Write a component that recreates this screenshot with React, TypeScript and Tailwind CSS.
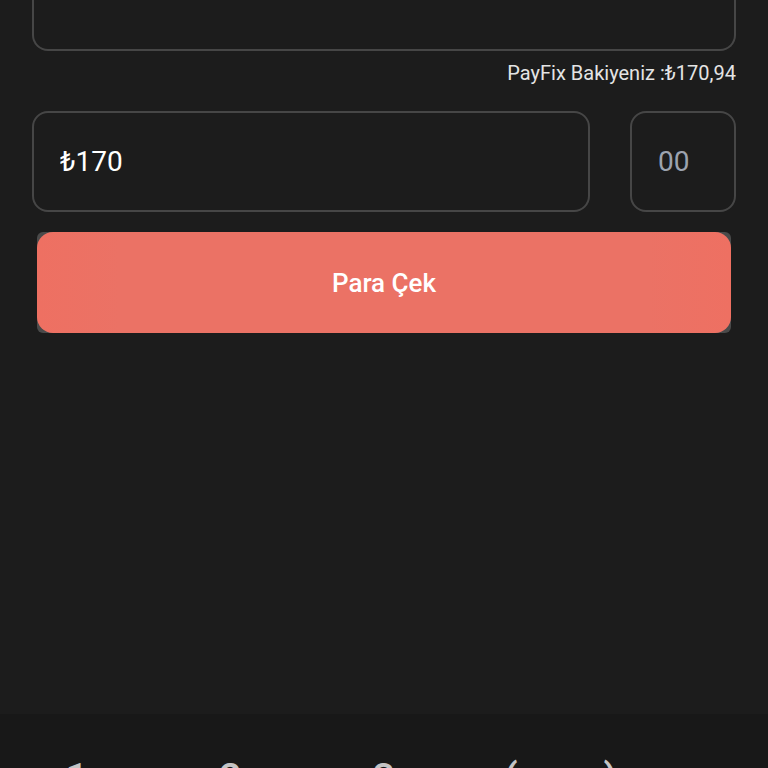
import React, { useState } from 'react';

const digitKeys = ['1', '2', '3'];
const bracketKeys = ['(', ')'];

const Withdraw = () => {
  const [account, setAccount] = useState<string>('');
  const [amount, setAmount] = useState<string>('₺170');
  const [cents, setCents] = useState<string>('');

  const handleKey = (key: string) => {
    setAmount(prev => prev + key);
  };

  return (
    <div className="flex h-screen flex-col overflow-hidden bg-[#1c1c1c] font-['Roboto',sans-serif] text-white">
      <main className="flex-1 px-8">
        <input
          type="text"
          aria-label="Hesap"
          value={account}
          onChange={(e) => setAccount(e.target.value)}
          className="block h-[51px] w-full rounded-b-2xl border-2 border-t-0 border-[#464646] bg-transparent px-7 text-[28px] outline-none"
        />

        <p className="mt-2 text-right text-[20px] leading-7 text-[#e4e4e4]">PayFix Bakiyeniz :₺170,94</p>

        <div className="mt-6 flex gap-10">
          <input
            type="text"
            aria-label="Tutar"
            value={amount}
            onChange={(e) => setAmount(e.target.value)}
            className="h-[101px] min-w-0 flex-1 rounded-2xl border-2 border-[#464646] bg-transparent px-[26px] text-[28px] outline-none"
          />
          <input
            type="text"
            aria-label="Kuruş"
            placeholder="00"
            value={cents}
            onChange={(e) => setCents(e.target.value)}
            className="h-[101px] w-[106px] rounded-2xl border-2 border-[#464646] bg-transparent px-[26px] text-[28px] outline-none placeholder:text-[#9ca3af]"
          />
        </div>

        {/* grey backing shows at the rounded corners */}
        <div className="mx-[5px] mt-5 rounded-md bg-[#4a4a4a]">
          <button
            type="button"
            className="block h-[101px] w-full rounded-2xl bg-[linear-gradient(to_right,#ee7062,#eb7265_12%,#eb7265_88%,#ee7062)] pt-0.5 text-[26px] font-medium text-white"
          >
            Para Çek
          </button>
        </div>
      </main>

      <footer className="flex h-[54px] overflow-hidden bg-[#181818] pt-[45px] text-[40px] leading-10 font-medium text-[#c4c4c4]">
        <div className="grid w-3/5 grid-cols-3">
          {digitKeys.map((key) => (
            <button key={key} type="button" onClick={() => handleKey(key)} className="h-10">
              {key}
            </button>
          ))}
        </div>
        <div className="grid w-[26%] grid-cols-2">
          {bracketKeys.map((key) => (
            <button key={key} type="button" onClick={() => handleKey(key)} className="h-10">
              {key}
            </button>
          ))}
        </div>
      </footer>
    </div>
  );
};

export default Withdraw;
